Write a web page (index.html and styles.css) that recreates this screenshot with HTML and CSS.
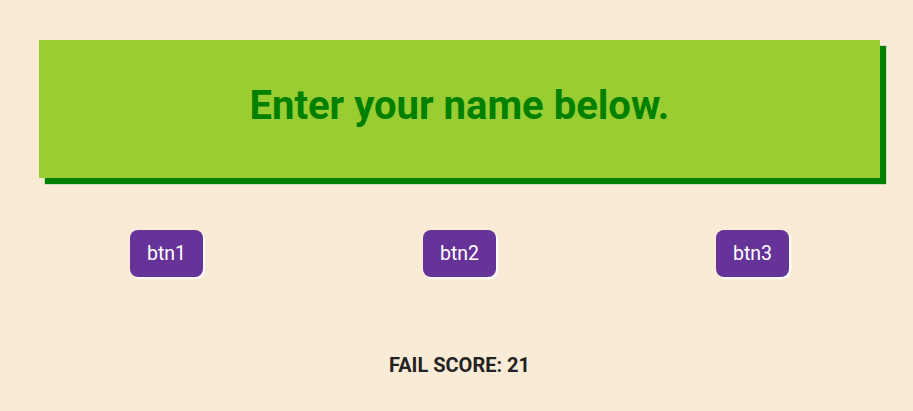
FILE: index.html
```html
<!DOCTYPE html>
<html>
<head>
<meta charset="utf-8">
<link rel="stylesheet" href="styles.css">
</head>
<body>
<main class="page">
  <header class="banner">
    <h1 class="banner-title">Enter your name below.</h1>
  </header>
  <div class="buttons">
    <div class="cell"><button class="btn">btn1</button></div>
    <div class="cell"><button class="btn">btn2</button></div>
    <div class="cell"><button class="btn">btn3</button></div>
  </div>
  <p class="score">FAIL SCORE: 21</p>
</main>
</body>
</html>
```
FILE: styles.css
```css
html, body {
  margin: 0;
  padding: 0;
  background: #faebd7;
  font-family: Roboto, "Liberation Sans", sans-serif;
}
.page {
  padding-top: 40px;
}
.banner {
  margin: 0 33px 0 39px;
  height: 138px;
  padding-bottom: 8px;
  box-sizing: border-box;
  background: #9acd32;
  box-shadow: 6px 6px 1px #008000;
  display: flex;
  align-items: center;
  justify-content: center;
}
.banner-title {
  margin: 0;
  color: #008000;
  font-size: 40px;
  font-weight: 700;
}
.buttons {
  margin-top: 52px;
  padding-left: 6px;
  display: grid;
  grid-template-columns: repeat(3, 293px);
  justify-content: center;
}
.cell {
  display: flex;
  justify-content: center;
}
.btn {
  width: 73px;
  height: 47px;
  border: none;
  border-radius: 8px;
  background: #663399;
  color: #fff;
  font-family: Roboto, "Liberation Sans", sans-serif;
  font-size: 19.5px;
  box-shadow: 2px 2px 1px #fff;
  padding: 0;
}
.score {
  margin: 76px 0 0;
  padding-left: 6px;
  text-align: center;
  font-size: 20px;
  font-weight: 700;
  color: #222;
}
```
